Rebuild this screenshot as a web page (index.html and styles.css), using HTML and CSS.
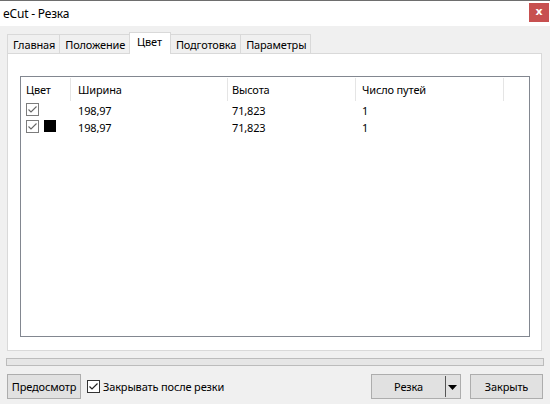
FILE: index.html
```html
<!DOCTYPE html>
<html>
<head>
<meta charset="utf-8">
<link rel="stylesheet" href="styles.css">
</head>
<body>
<div class="window">
  <div class="titlebar">
    <span class="title">eCut - Резка</span>
    <div class="close">x</div>
  </div>
  <div class="content">
    <div class="tabs">
      <div class="tab">Главная</div>
      <div class="tab">Положение</div>
      <div class="tab active">Цвет</div>
      <div class="tab">Подготовка</div>
      <div class="tab">Параметры</div>
    </div>
    <div class="panel">
      <div class="list">
        <div class="row header">
          <div class="cell c1">Цвет</div>
          <div class="cell c2">Ширина</div>
          <div class="cell c3">Высота</div>
          <div class="cell c4">Число путей</div>
          <div class="cell c5"></div>
        </div>
        <div class="row">
          <div class="cell c1">
            <svg class="cb" width="13" height="13" viewBox="0 0 13 13"><rect x="0.5" y="0.5" width="12" height="12" fill="#fff" stroke="#7c7c7c"/><path d="M2.5 6.5 L5 9 L10.5 3.5" fill="none" stroke="#666" stroke-width="1.1"/></svg>
          </div>
          <div class="cell c2">198,97</div>
          <div class="cell c3">71,823</div>
          <div class="cell c4">1</div>
          <div class="cell c5"></div>
        </div>
        <div class="row">
          <div class="cell c1">
            <svg class="cb" width="13" height="13" viewBox="0 0 13 13"><rect x="0.5" y="0.5" width="12" height="12" fill="#fff" stroke="#7c7c7c"/><path d="M2.5 6.5 L5 9 L10.5 3.5" fill="none" stroke="#666" stroke-width="1.1"/></svg>
            <span class="swatch"></span>
          </div>
          <div class="cell c2">198,97</div>
          <div class="cell c3">71,823</div>
          <div class="cell c4">1</div>
          <div class="cell c5"></div>
        </div>
      </div>
    </div>
    <div class="progress"></div>
    <div class="footer">
      <div class="btn preview">Предосмотр</div>
      <label class="check">
        <svg class="cb" width="13" height="13" viewBox="0 0 13 13"><rect x="0.5" y="0.5" width="12" height="12" fill="#fff" stroke="#333"/><path d="M2.5 6.5 L5 9 L10.5 3.5" fill="none" stroke="#222" stroke-width="1.2"/></svg>
        <span>Закрывать после резки</span>
      </label>
      <div class="spacer"></div>
      <div class="btn split">
        <span class="split-label">Резка</span>
        <span class="split-sep"></span>
        <svg class="arrow" width="9" height="5" viewBox="0 0 9 5"><path d="M0 0 H9 L4.5 5 Z" fill="#000"/></svg>
      </div>
      <div class="btn closebtn">Закрыть</div>
    </div>
  </div>
</div>
</body>
</html>
```
FILE: styles.css
```css
* { box-sizing: border-box; }
html, body { margin: 0; padding: 0; }
body {
  width: 550px;
  height: 404px;
  overflow: hidden;
  font-family: "Noto Sans", "Liberation Sans", sans-serif;
  font-size: 11px;
  letter-spacing: -0.15px;
  color: #000;
  background: #f0f0f0;
}
.window {
  width: 550px;
  height: 404px;
  display: flex;
  flex-direction: column;
}
.titlebar {
  height: 26px;
  background: #fff;
  border-top: 1px solid #6e6e6e;
  display: flex;
  align-items: flex-start;
  justify-content: space-between;
}
.title {
  margin-left: 3px;
  margin-top: 5px;
  font-size: 12px;
  letter-spacing: -0.2px;
  line-height: 16px;
}
.close {
  width: 20px;
  height: 19px;
  margin-top: 2px;
  margin-right: 1px;
  background: #c75050;
  color: #fff;
  font-weight: bold;
  font-size: 11px;
  letter-spacing: 0;
  line-height: 17px;
  text-align: center;
  font-family: "DejaVu Sans", sans-serif;
}
.content {
  flex: 1;
  padding: 6px 7px 0 7px;
  display: flex;
  flex-direction: column;
}
.tabs {
  display: flex;
  align-items: flex-end;
  height: 21px;
  position: relative;
  z-index: 1;
}
.tab {
  height: 19px;
  padding: 0 4px 0 5px;
  border: 1px solid #d9d9d9;
  border-bottom: none;
  border-right: none;
  background: #f0f0f0;
  line-height: 19px;
  color: #000;
}
.tab:last-child { border-right: 1px solid #d9d9d9; }
.tab.active {
  height: 22px;
  margin-bottom: -1px;
  background: #fff;
  padding: 0 8px 0 7px;
  border-right: 1px solid #d9d9d9;
  line-height: 18px;
}
.tab.active + .tab { border-left: none; }
.panel {
  height: 298px;
  width: 535px;
  background: #fff;
  border: 1px solid #d9d9d9;
  padding: 22px 11px 0 12px;
}
.list {
  height: 261px;
  border: 1px solid #828790;
  background: #fff;
}
.row {
  display: grid;
  grid-template-columns: 50px 157px 128px 148px 1fr;
  height: 17px;
  line-height: 17px;
}
.row.header {
  height: 25px;
  line-height: 25px;
}
.row.header .cell {
  border-right: 1px solid #e5e5e5;
  margin: 1px 0 1px 0;
  line-height: 23px;
}
.row.header .c5 { border-right: none; }
.cell {
  white-space: nowrap;
  overflow: hidden;
}
.c1 { padding-left: 5px; display: flex; align-items: flex-start; }
.row.header .c1 { display: block; }
.c2 { padding-left: 7px; }
.c3 { padding-left: 4px; }
.c4 { padding-left: 6px; }
.cb { display: block; flex: none; }
.row .cb { margin-top: 1px; }
.swatch {
  display: block;
  width: 12px;
  height: 12px;
  background: #000;
  margin-left: 5px;
  margin-top: 1px;
}
.progress {
  margin-top: 7px;
  margin-left: -1px;
  width: 538px;
  height: 8px;
  border: 1px solid #bcbcbc;
  background: #e6e6e6;
}
.footer {
  margin-top: 8px;
  display: flex;
  align-items: center;
  height: 25px;
}
.btn {
  height: 25px;
  border: 1px solid #adadad;
  background: #e1e1e1;
  display: flex;
  align-items: center;
  justify-content: center;
  line-height: 16px;
}
.preview { width: 74px; }
.check {
  display: flex;
  align-items: center;
  margin-left: 6px;
}
.check span { margin-left: 3px; }
.spacer { flex: 1; }
.split {
  width: 90px;
  justify-content: flex-start;
  padding: 0;
}
.split-label {
  width: 73px;
  text-align: center;
}
.split-sep {
  width: 1px;
  height: 21px;
  background: #555;
  margin-left: 0;
}
.arrow { margin-left: 2px; margin-top: 1px; }
.closebtn { width: 73px; margin-left: 9px; margin-right: 0; }
```
